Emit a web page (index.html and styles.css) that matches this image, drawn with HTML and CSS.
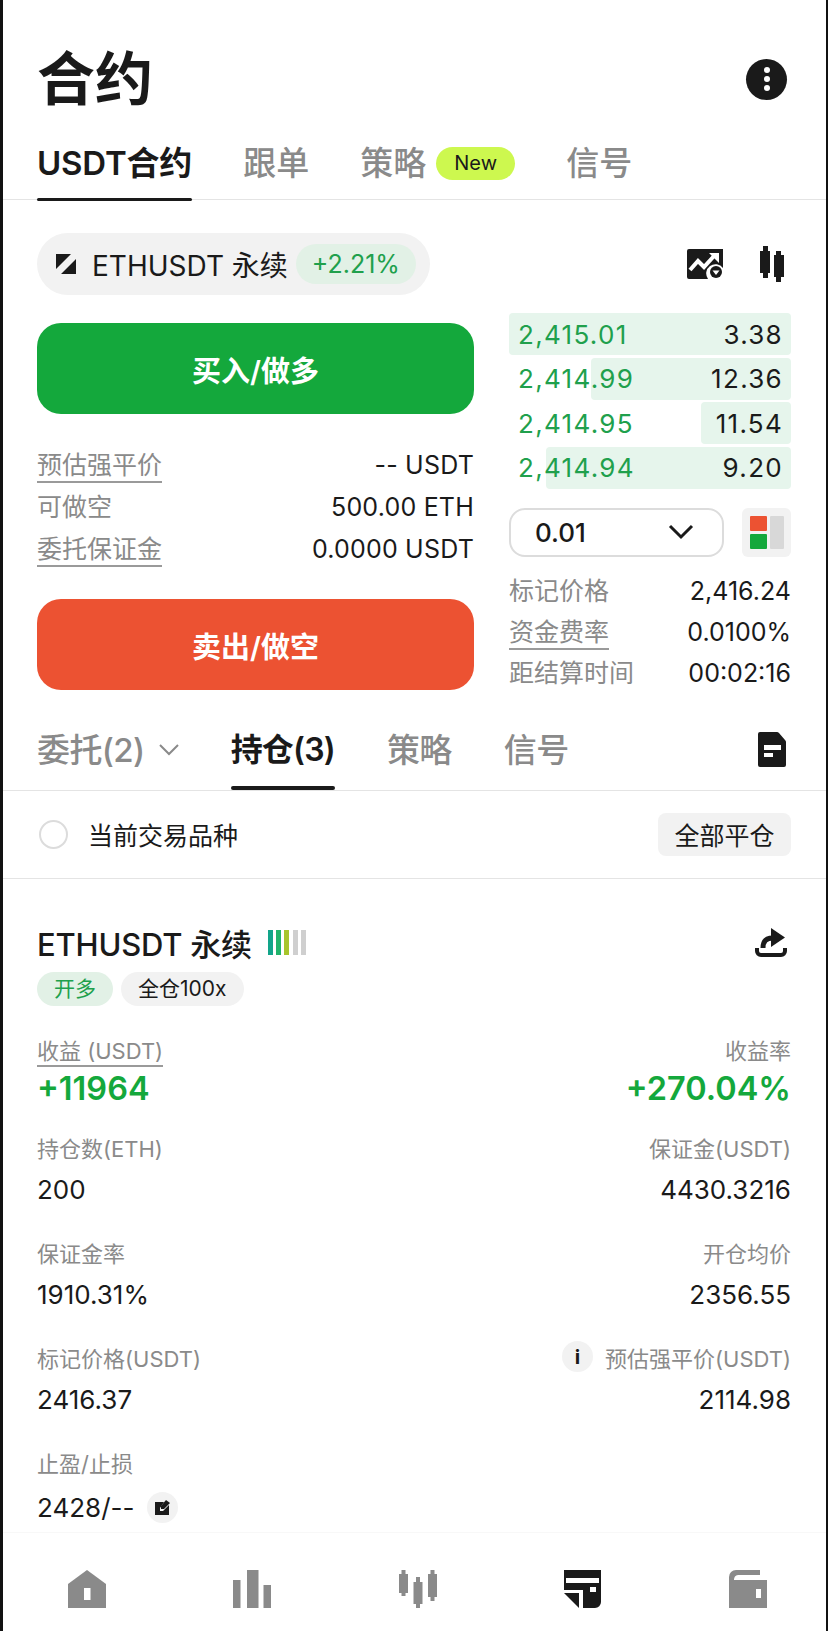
FILE: index.html
```html
<!DOCTYPE html>
<html lang="zh">
<head>
<meta charset="UTF-8" />
<title>合约</title>
<link rel="stylesheet" href="styles.css">
</head>
<body>
<div class="page">

	<header class="header">
		<h1 class="title">合约</h1>
		<button class="menu-btn"><i></i><i></i><i></i></button>
	</header>

	<nav class="tabs">
		<a class="tab active">USDT合约</a>
		<a class="tab">跟单</a>
		<a class="tab tab-badge">策略<span class="new-badge">New</span></a>
		<a class="tab">信号</a>
	</nav>

	<section class="pair-row">
		<div class="pair-pill">
			<svg class="pair-icon" viewBox="0 0 20 20"><path d="M0 0H15L0 15Z M20 5V20H5Z" fill="#1a1a1a"/></svg>
			<span class="pair-name">ETHUSDT 永续</span>
			<span class="pair-change">+2.21%</span>
		</div>
		<div class="pair-tools">
			<svg class="chart-icon" viewBox="0 0 36 30"><path d="M2 0H36V19A9 9 0 0 0 21 30H2A2 2 0 0 1 0 28V2A2 2 0 0 1 2 0Z" fill="#1a1a1a"/><path d="M3 21L11 12L17 18L27 7" fill="none" stroke="#fff" stroke-width="4"/><path d="M22 4H32V14Z" fill="#fff"/><circle cx="29" cy="23" r="6" fill="#1a1a1a"/><path d="M25.5 21.5H32.5L29 26Z" fill="#fff"/></svg>
			<svg class="candle-icon" viewBox="0 0 24 36"><path d="M3 0H8V5H10V27H8V32H3V27H0V5H3Z M16 5H21V9H24V31H21V36H16V31H14V9H16Z" fill="#1a1a1a"/></svg>
		</div>
	</section>

	<section class="trade">
		<div class="trade-left">
			<button class="trade-btn buy">买入/做多</button>
			<div class="info-list">
				<div class="info-row"><span class="info-label dashed">预估强平价</span><span>-- USDT</span></div>
				<div class="info-row"><span class="info-label">可做空</span><span>500.00 ETH</span></div>
				<div class="info-row"><span class="info-label dashed">委托保证金</span><span>0.0000 USDT</span></div>
			</div>
			<button class="trade-btn sell">卖出/做空</button>
		</div>
		<div class="trade-right">
			<div class="book">
				<div class="book-row"><span class="book-bar" style="width: 100%"></span><span class="book-price">2,415.01</span><span class="book-size">3.38</span></div>
				<div class="book-row"><span class="book-bar" style="width: 71%"></span><span class="book-price">2,414.99</span><span class="book-size">12.36</span></div>
				<div class="book-row"><span class="book-bar" style="width: 32%"></span><span class="book-price">2,414.95</span><span class="book-size">11.54</span></div>
				<div class="book-row"><span class="book-bar" style="width: 87%"></span><span class="book-price">2,414.94</span><span class="book-size">9.20</span></div>
			</div>
			<div class="depth-row">
				<div class="depth-select">
					<span>0.01</span>
					<svg viewBox="0 0 26 16"><path d="M2 2L13 13L24 2" fill="none" stroke="#1a1a1a" stroke-width="3"/></svg>
				</div>
				<div class="depth-toggle">
					<svg viewBox="0 0 34 33"><rect width="17" height="15" rx="1" fill="#ec5232"/><rect y="18" width="17" height="15" rx="1" fill="#14a83c"/><rect x="20" width="14" height="33" rx="1" fill="#d8d8d8"/></svg>
				</div>
			</div>
			<div class="info-list small">
				<div class="info-row"><span class="info-label">标记价格</span><span>2,416.24</span></div>
				<div class="info-row"><span class="info-label dashed">资金费率</span><span>0.0100%</span></div>
				<div class="info-row"><span class="info-label">距结算时间</span><span>00:02:16</span></div>
			</div>
		</div>
	</section>

	<nav class="tabs tabs-sub">
		<a class="tab tab-drop">委托(2)<svg viewBox="0 0 20 12"><path d="M1 1L10 10L19 1" fill="none" stroke="#8a8a8a" stroke-width="2"/></svg></a>
		<a class="tab active">持仓(3)</a>
		<a class="tab">策略</a>
		<a class="tab">信号</a>
		<svg class="doc-icon" viewBox="0 0 28 35"><path d="M2 0H19Q20 0 21 1L27 8Q28 9 28 10V33A2 2 0 0 1 26 35H2A2 2 0 0 1 0 33V2A2 2 0 0 1 2 0Z" fill="#1a1a1a"/><rect x="6" y="13" width="17" height="5" fill="#fff"/><rect x="6" y="21" width="9" height="4" fill="#fff"/></svg>
	</nav>

	<section class="filter-row">
		<span class="radio"></span>
		<span class="filter-text">当前交易品种</span>
		<button class="close-all">全部平仓</button>
	</section>

	<section class="position">
		<div class="pos-head">
			<span class="pos-name">ETHUSDT 永续</span>
			<span class="signal"><i class="s1"></i><i class="s2"></i><i class="s3"></i><i class="s4"></i><i class="s5"></i></span>
			<svg class="share-icon" viewBox="0 0 32 31"><path d="M8 21C8 14 11 11 18 11" fill="none" stroke="#1a1a1a" stroke-width="5"/><path d="M16 1L30 10.500L16 20Z" fill="#1a1a1a"/><path d="M2 21V24A4 4 0 0 0 6 28H26A4 4 0 0 0 30 24V21" fill="none" stroke="#1a1a1a" stroke-width="4"/></svg>
		</div>
		<div class="chips">
			<span class="chip chip-long">开多</span>
			<span class="chip">全仓100x</span>
		</div>
		<div class="stats">
			<div class="stat-row first">
				<div class="stat"><span class="stat-label dashed">收益 (USDT)</span><b class="stat-big">+11964</b></div>
				<div class="stat right"><span class="stat-label">收益率</span><b class="stat-big">+270.04%</b></div>
			</div>
			<div class="stat-row">
				<div class="stat"><span class="stat-label">持仓数(ETH)</span><span class="stat-value">200</span></div>
				<div class="stat right"><span class="stat-label">保证金(USDT)</span><span class="stat-value">4430.3216</span></div>
			</div>
			<div class="stat-row">
				<div class="stat"><span class="stat-label">保证金率</span><span class="stat-value">1910.31%</span></div>
				<div class="stat right"><span class="stat-label">开仓均价</span><span class="stat-value">2356.55</span></div>
			</div>
			<div class="stat-row">
				<div class="stat"><span class="stat-label">标记价格(USDT)</span><span class="stat-value">2416.37</span></div>
				<div class="stat right"><span class="stat-label"><span class="round-btn info-i">i</span>预估强平价(USDT)</span><span class="stat-value">2114.98</span></div>
			</div>
			<div class="stat-row">
				<div class="stat"><span class="stat-label">止盈/止损</span>
					<span class="stat-value last">2428/--<span class="round-btn"><svg viewBox="0 0 16 15"><path d="M0 2H9L5 8V11H8L14 5V15H0Z" fill="#1a1a1a"/><path d="M11 0L15 3L9 9L6 9V6Z" fill="#1a1a1a"/></svg></span></span>
				</div>
			</div>
		</div>
	</section>

	<footer class="bottom-nav">
		<svg viewBox="0 0 38 38"><path d="M19 0L38 14V38H0V14Z" fill="#8a8a8a"/><rect x="16" y="18" width="6.500" height="12" fill="#fff"/></svg>
		<svg viewBox="0 0 38 38"><rect y="10" width="7.500" height="28" fill="#8a8a8a"/><rect x="14" width="11.500" height="38" fill="#8a8a8a"/><rect x="30.500" y="15" width="7.500" height="23" fill="#8a8a8a"/></svg>
		<svg viewBox="0 0 38 38"><path d="M2.500 0H6.500V4H9V23H6.500V26H2.500V23H0V4H2.500Z M17 7H21V12H23.500V34H21V38H17V34H14.500V12H17Z M31.500 0H35.500V4H38V27H35.500V31H31.500V27H29V4H31.500Z" fill="#8a8a8a"/></svg>
		<svg viewBox="0 0 38 38"><path d="M0 0H37V32A6 6 0 0 1 31 38H19V20H0Z" fill="#1a1a1a"/><path d="M0 23H15V38Z" fill="#1a1a1a"/><rect x="2" y="8" width="33" height="5" fill="#fff"/><rect x="26" y="17" width="6" height="5" fill="#fff"/></svg>
		<svg viewBox="0 0 38 38"><path d="M0 10V7A7 7 0 0 1 7 0H31V5H9A5 5 0 0 0 5 10H38V38H0Z" fill="#8a8a8a"/><rect x="27" y="19" width="5" height="9" fill="#fff"/></svg>
	</footer>

</div>
</body>
</html>
```

FILE: styles.css
```css
* {
	box-sizing: border-box;
}

body {
	margin: 0;
	background: #fff;
	color: #1a1a1a;
	font-family: Inter, "Noto Sans CJK SC", sans-serif;
}

button {
	border: none;
	font-family: inherit;
	padding: 0;
}

.page {
	width: 828px;
	height: 1631px;
	display: flex;
	flex-direction: column;
	overflow: hidden;
	border-left: 3px solid #111;
	border-right: 2px solid #111;
}

.page > * {
	flex: none;
}

/* header */
.header {
	display: flex;
	align-items: center;
	justify-content: space-between;
	padding: 20px 39px 0 34px;
	height: 138px;
}

.title {
	margin: 0;
	font-size: 58px;
	line-height: 70px;
	font-weight: 700;
}

.menu-btn {
	width: 41px;
	height: 41px;
	border-radius: 50%;
	background: #1a1a1a;
	display: flex;
	flex-direction: column;
	align-items: center;
	justify-content: center;
	gap: 3px;
}

.menu-btn i {
	width: 6px;
	height: 6px;
	border-radius: 50%;
	background: #fff;
}

/* tabs */
.tabs {
	display: flex;
	align-items: flex-start;
	gap: 51px;
	height: 62px;
	padding: 0 35px 0 34px;
	border-bottom: 1px solid #e4e4e4;
}

.tab {
	position: relative;
	display: flex;
	align-items: center;
	height: 62px;
	font-size: 33px;
	line-height: 50px;
	padding-bottom: 12px;
	font-weight: 500;
	color: #8a8a8a;
	white-space: nowrap;
}

.tab.active {
	color: #1a1a1a;
	font-weight: 600;
	letter-spacing: -0.2px;
}

.tab.active::after {
	content: "";
	position: absolute;
	left: 0;
	right: 0;
	bottom: -1px;
	height: 3px;
	border-radius: 2px;
	background: #1a1a1a;
}

.new-badge {
	margin-left: 10px;
	width: 79px;
	height: 33px;
	border-radius: 17px;
	background: #cdf84f;
	color: #1a1a1a;
	font-size: 20px;
	font-weight: 400;
	line-height: 33px;
	text-align: center;
}

/* pair */
.pair-row {
	display: flex;
	align-items: center;
	justify-content: space-between;
	margin-top: 33px;
	padding: 0 42px 0 34px;
}

.pair-pill {
	display: flex;
	align-items: center;
	width: 393px;
	height: 62px;
	padding-left: 19px;
	border-radius: 31px;
	background: #f2f2f2;
}

.pair-icon {
	width: 20px;
	height: 20px;
}

.pair-name {
	margin-left: 16px;
	font-size: 28px;
	white-space: nowrap;
}

.pair-change {
	margin-left: 8px;
	width: 120px;
	height: 40px;
	border-radius: 20px;
	background: #e2f1e6;
	color: #20a04c;
	font-size: 25px;
	line-height: 40px;
	text-align: center;
}

.pair-tools {
	display: flex;
	align-items: center;
	gap: 37px;
}

.chart-icon {
	width: 36px;
	height: 30px;
}

.candle-icon {
	width: 24px;
	height: 36px;
}

/* trade area */
.trade {
	display: flex;
	gap: 35px;
	padding: 18px 35px 0 34px;
}

.trade-left {
	width: 437px;
	padding-top: 10px;
}

.trade-right {
	width: 282px;
}

.trade-btn {
	display: block;
	width: 100%;
	height: 91px;
	border-radius: 24px;
	color: #fff;
	font-size: 29px;
	font-weight: 600;
}

.trade-btn.buy {
	background: #14a83c;
}

.trade-btn.sell {
	background: #ec5232;
}

.info-list {
	padding: 30px 0 29px;
}

.info-row {
	display: flex;
	align-items: center;
	justify-content: space-between;
	height: 42px;
	font-size: 25px;
	line-height: 32px;
	white-space: nowrap;
}

.trade-left .info-row span:last-child {
	letter-spacing: 0.2px;
}

.info-label {
	color: #8a8a8a;
}

.dashed {
	box-shadow: 0 2px 0 #9a9a9a;
}

.book {
	display: flex;
	flex-direction: column;
	gap: 2.5px;
}

.book-row {
	position: relative;
	display: flex;
	align-items: center;
	justify-content: space-between;
	height: 42px;
	padding: 0 8px 0 9px;
	font-size: 26px;
	letter-spacing: 1.3px;
}

.book-bar {
	position: absolute;
	top: 0;
	right: 0;
	bottom: 0;
	border-radius: 4px;
	background: #e6f5ec;
}

.book-price,
.book-size {
	position: relative;
}

.book-price {
	color: #20a04c;
}

.depth-row {
	display: flex;
	justify-content: space-between;
	margin-top: 19px;
}

.depth-select {
	display: flex;
	align-items: center;
	justify-content: space-between;
	width: 215px;
	height: 49px;
	padding: 0 28px 0 24px;
	border: 2px solid #dcdcdc;
	border-radius: 16px;
	font-size: 26px;
	font-weight: 500;
}

.depth-select svg {
	width: 26px;
	height: 16px;
}

.depth-toggle {
	display: flex;
	align-items: center;
	justify-content: center;
	width: 49px;
	height: 49px;
	border-radius: 6px;
	background: #f2f2f2;
}

.depth-toggle svg {
	width: 34px;
	height: 33px;
}

.info-list.small {
	padding: 14px 0 0;
}

.info-list.small .info-row {
	height: 41px;
}

/* second tabs */
.tabs-sub {
	gap: 52px;
	height: 97px;
	position: relative;
}

.tabs-sub .tab {
	height: 96px;
	padding: 16px 0 0;
	letter-spacing: -0.6px;
}

.tabs-sub .tab.active {
	font-size: 32px;
	letter-spacing: -0.8px;
}

.tabs-sub .tab.active::after {
	height: 4px;
	bottom: 0;
}

.tab-drop svg {
	width: 20px;
	height: 12px;
	margin-left: 14px;
}

.doc-icon {
	position: absolute;
	right: 40px;
	top: 38px;
	width: 28px;
	height: 35px;
}

/* filter */
.filter-row {
	display: flex;
	align-items: center;
	height: 88px;
	padding: 0 35px 0 36px;
	border-bottom: 1px solid #e4e4e4;
}

.radio {
	width: 29px;
	height: 29px;
	border-radius: 50%;
	border: 2px solid #dcdcdc;
}

.filter-text {
	margin-left: 20px;
	font-size: 25px;
}

.close-all {
	margin-left: auto;
	width: 133px;
	height: 43px;
	border-radius: 8px;
	background: #f2f2f2;
	color: #1a1a1a;
	font-size: 25px;
}

/* position */
.page > .position {
	flex: 1;
	min-height: 0;
	padding: 0 35px 0 34px;
}

.pos-head {
	display: flex;
	align-items: center;
	margin-top: 44px;
	height: 40px;
}

.pos-name {
	font-size: 31px;
	font-weight: 500;
	letter-spacing: -0.2px;
}

.signal {
	display: flex;
	gap: 3.25px;
	margin-left: 16px;
}

.signal i {
	width: 5px;
	height: 25px;
}

.s1 { background: #12a58a; }
.s2 { background: #21b36b; }
.s3 { background: #a7c52c; }
.s4, .s5 { background: #cfcfcf; }

.share-icon {
	margin-left: auto;
	margin-right: 4px;
	width: 32px;
	height: 31px;
}

.chips {
	display: flex;
	gap: 8px;
	margin-top: 9px;
}

.chip {
	height: 34px;
	padding: 0 17px;
	border-radius: 17px;
	background: #f2f2f2;
	font-size: 21px;
	line-height: 34px;
}

.chip-long {
	background: #e2f1e6;
	color: #20a04c;
}

.stats {
	display: flex;
	flex-direction: column;
	gap: 30px;
	margin-top: 29px;
}

.stat-row {
	display: flex;
	justify-content: space-between;
}

.stat-row.first {
	margin-bottom: -8px;
}

.stat {
	display: flex;
	flex-direction: column;
	align-items: flex-start;
}

.stat.right {
	align-items: flex-end;
}

.stat-label {
	display: flex;
	align-items: center;
	height: 28px;
	color: #8a8a8a;
	font-size: 22px;
}

.stat-label.dashed {
	height: 30px;
	padding-bottom: 2px;
	margin-bottom: -2px;
}

.stat-big {
	margin-top: 4px;
	color: #14a83c;
	font-size: 32.500px;
	line-height: 44px;
	font-weight: 600;
}

.stat-value {
	display: flex;
	align-items: center;
	margin-top: 11px;
	font-size: 26px;
	line-height: 36px;
}

.stat-value.last {
	margin-top: 14px;
}

.round-btn {
	display: inline-flex;
	align-items: center;
	justify-content: center;
	width: 31px;
	height: 31px;
	margin-left: 13px;
	border-radius: 50%;
	background: #f2f2f2;
	color: #1a1a1a;
	font-size: 20px;
	font-weight: 700;
}

.round-btn svg {
	width: 16px;
	height: 15px;
}

.info-i {
	margin: 0 12px 0 0;
}

/* bottom nav */
.bottom-nav {
	display: flex;
	justify-content: space-between;
	height: 99px;
	padding: 37px 59px 0 65px;
	border-top: 1px solid #f8f8f8;
}

.bottom-nav svg {
	width: 38px;
	height: 38px;
}
```
